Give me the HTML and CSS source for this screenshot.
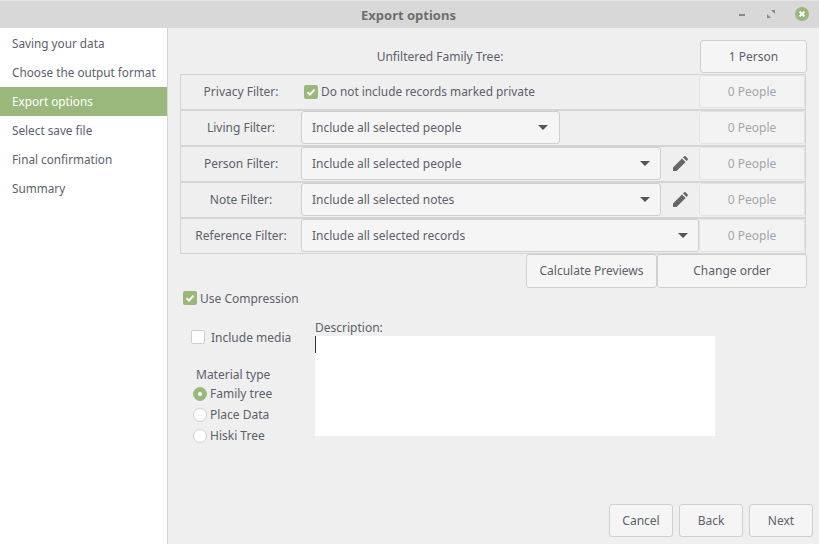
FILE: index.html
```html
<!DOCTYPE html>
<html lang="en">
<head>
    <meta charset="UTF-8">
    <meta name="viewport" content="width=device-width, initial-scale=1.0">
    <title>Export options</title>
    <link rel="stylesheet" href="styles.css">
</head>
<body>
    <div class="window">
        <header class="titlebar">
            <span class="title">Export options</span>
            <div class="win-buttons">
                <svg class="win-icon" width="12" height="12" viewBox="0 0 12 12"><rect x="4" y="6" width="6" height="2" fill="#8a8a8a"/></svg>
                <svg class="win-icon" width="12" height="12" viewBox="0 0 12 12"><path d="M6 2h4v4zM2 6l4 4H2z" fill="#8a8a8a"/></svg>
                <svg class="win-close" width="14" height="14" viewBox="0 0 14 14"><circle cx="7" cy="7" r="7" fill="#9ab87c"/><path d="M4.6 4.6l4.8 4.8M9.4 4.6l-4.8 4.8" stroke="#fff" stroke-width="2"/></svg>
            </div>
        </header>
        <div class="content">
            <nav class="sidebar">
                <div class="step">Saving your data</div>
                <div class="step">Choose the output format</div>
                <div class="step active">Export options</div>
                <div class="step">Select save file</div>
                <div class="step">Final confirmation</div>
                <div class="step">Summary</div>
            </nav>
            <main class="main">
                <div class="top-row">
                    <span class="top-label">Unfiltered Family Tree:</span>
                    <button class="btn count-btn">1 Person</button>
                </div>
                <div class="filters">
                    <div class="filter-row">
                        <div class="filter-label">Privacy Filter:</div>
                        <label class="check privacy">
                            <svg class="box" width="14" height="14" viewBox="0 0 14 14"><rect width="14" height="14" rx="2" fill="#9ab87c"/><path d="M3.5 7.2l2.4 2.4 4.6-5" fill="none" stroke="#fff" stroke-width="2"/></svg>
                            <span class="privacy-text">Do not include records marked private</span>
                        </label>
                        <div class="filter-count">0 People</div>
                    </div>
                    <div class="filter-row">
                        <div class="filter-label">Living Filter:</div>
                        <div class="select living">Include all selected people<span class="arrow"></span></div>
                        <div class="spacer"></div>
                        <div class="filter-count">0 People</div>
                    </div>
                    <div class="filter-row">
                        <div class="filter-label">Person Filter:</div>
                        <div class="select">Include all selected people<span class="arrow"></span></div>
                        <div class="edit">
                            <svg width="18" height="18" viewBox="0 0 18 18"><path d="M2 16v-3.600L11 3.400 14.600 7 5.600 16zM12 2.400l1.200-1.100q.7-.6 1.400 0l2.100 2.100q.6.700 0 1.400L15.600 6z" fill="#666"/></svg>
                        </div>
                        <div class="filter-count">0 People</div>
                    </div>
                    <div class="filter-row">
                        <div class="filter-label">Note Filter:</div>
                        <div class="select">Include all selected notes<span class="arrow"></span></div>
                        <div class="edit">
                            <svg width="18" height="18" viewBox="0 0 18 18"><path d="M2 16v-3.600L11 3.400 14.600 7 5.600 16zM12 2.400l1.200-1.100q.7-.6 1.400 0l2.100 2.100q.6.700 0 1.400L15.600 6z" fill="#666"/></svg>
                        </div>
                        <div class="filter-count">0 People</div>
                    </div>
                    <div class="filter-row">
                        <div class="filter-label">Reference Filter:</div>
                        <div class="select">Include all selected records<span class="arrow"></span></div>
                        <div class="filter-count">0 People</div>
                    </div>
                </div>
                <div class="action-row">
                    <button class="btn calc-btn">Calculate Previews</button>
                    <button class="btn order-btn">Change order</button>
                </div>
                <label class="check compression">
                    <svg class="box" width="14" height="14" viewBox="0 0 14 14"><rect width="14" height="14" rx="2" fill="#9ab87c"/><path d="M3.5 7.2l2.4 2.4 4.6-5" fill="none" stroke="#fff" stroke-width="2"/></svg>
                    Use Compression
                </label>
                <div class="lower">
                    <div class="options">
                        <label class="check media"><span class="empty-box"></span>Include media</label>
                        <div class="material-title">Material type</div>
                        <label class="radio"><span class="dot on"></span>Family tree</label>
                        <label class="radio"><span class="dot"></span>Place Data</label>
                        <label class="radio"><span class="dot"></span>Hiski Tree</label>
                    </div>
                    <div class="description">
                        <div class="desc-label">Description:</div>
                        <div class="desc-box"><span class="caret"></span></div>
                    </div>
                </div>
                <div class="footer">
                    <button class="btn nav-btn">Cancel</button>
                    <button class="btn nav-btn">Back</button>
                    <button class="btn nav-btn">Next</button>
                </div>
            </main>
        </div>
    </div>
</body>
</html>
```

FILE: styles.css
```css
* {
    box-sizing: border-box;
}

body {
    margin: 0;
    background-color: #efefef;
    color: #5c616c;
    font-family: "Noto Sans", sans-serif;
    font-size: 12px;
}

.window {
    width: 819px;
    height: 544px;
    display: flex;
    flex-direction: column;
    overflow: hidden;
}

.titlebar {
    height: 28px;
    flex: none;
    background-color: #d8d8d8;
    border-top: 1px solid #e6e6e6;
    position: relative;
    display: flex;
    align-items: center;
    justify-content: center;
}

.title {
    font-size: 13px;
    font-weight: bold;
    color: #6e6e6e;
    padding-right: 2px;
}

.win-buttons {
    position: absolute;
    right: 10px;
    top: 6px;
    display: flex;
    align-items: center;
    gap: 18px;
}

.content {
    flex: 1;
    display: flex;
    min-height: 0;
}

.sidebar {
    width: 168px;
    flex: none;
    background-color: #fff;
    border-right: 1px solid #d5d5d5;
    padding-top: 1px;
}

.step {
    height: 29px;
    line-height: 29px;
    padding-left: 12px;
    font-size: 11.75px;
}

.step.active {
    background-color: #9ab87c;
    color: #fff;
}

.main {
    flex: 1;
    display: flex;
    flex-direction: column;
    padding: 12px 12px 7px 12px;
}

.btn {
    font: inherit;
    color: inherit;
    background-color: #f5f5f5;
    border: 1px solid #cfcfcf;
    border-radius: 3px;
    padding: 0;
}

.top-row {
    display: flex;
    align-items: center;
    height: 33px;
}

.top-label {
    flex: 1;
    text-align: center;
}

.count-btn {
    width: 107px;
    height: 33px;
}

.filters {
    width: 626px;
    border: 1px solid #d5d5d5;
    border-bottom: 0;
    margin-top: 1px;
}

.filter-row {
    display: flex;
    height: 36px;
    padding-bottom: 1px;
    border-bottom: 2px solid #d5d5d5;
}

.filter-row:last-child {
    height: 35px;
    border-bottom: 1px solid #d5d5d5;
}

.filter-label {
    width: 120px;
    flex: none;
    display: flex;
    align-items: center;
    justify-content: center;
}

.select {
    flex: 1;
    display: flex;
    align-items: center;
    justify-content: space-between;
    background-color: #f5f5f5;
    border: 1px solid #cfcfcf;
    border-radius: 3px;
    padding: 0 10px;
}

.select.living {
    flex: none;
    width: 259px;
    padding-right: 11px;
}

.arrow {
    width: 0;
    height: 0;
    border-left: 5px solid transparent;
    border-right: 5px solid transparent;
    border-top: 5px solid #555;
}

.spacer {
    flex: 1;
}

.edit {
    width: 38px;
    flex: none;
    display: flex;
    align-items: center;
    justify-content: center;
}

.filter-count {
    width: 106px;
    flex: none;
    display: flex;
    align-items: center;
    justify-content: center;
    color: #a5a7ab;
    background-color: #f3f3f3;
    border: 1px solid #e3e3e3;
    border-radius: 3px;
}

.check,
.radio {
    display: flex;
    align-items: center;
}

.privacy {
    flex: 1;
    gap: 3px;
    padding-left: 3px;
}

.privacy-text {
    font-size: 11.85px;
    padding-bottom: 2px;
}

.action-row {
    display: flex;
    justify-content: flex-end;
}

.calc-btn {
    width: 131px;
    height: 34px;
    padding-bottom: 2px;
}

.order-btn {
    width: 150px;
    height: 34px;
    padding-bottom: 2px;
}

.compression {
    gap: 3px;
    margin: 1px 0 0 3px;
    height: 18px;
}

.lower {
    display: flex;
    margin-top: 11px;
}

.options {
    width: 135px;
    flex: none;
    padding-top: 10px;
}

.media {
    padding-left: 11px;
    gap: 6px;
    height: 18px;
}

.empty-box {
    width: 14px;
    height: 14px;
    background-color: #fff;
    border: 1px solid #cfcfcf;
    border-radius: 2px;
}

.material-title {
    margin: 20px 0 0 16px;
    height: 17px;
    line-height: 18px;
}

.radio {
    gap: 3px;
    padding-left: 13px;
    height: 21px;
}

.dot {
    width: 14px;
    height: 14px;
    border-radius: 50%;
    background-color: #fff;
    border: 1px solid #cfcfcf;
    display: flex;
    align-items: center;
    justify-content: center;
}

.dot.on {
    background-color: #9ab87c;
    border-color: #9ab87c;
}

.dot.on::after {
    content: "";
    width: 4px;
    height: 4px;
    border-radius: 50%;
    background-color: #fff;
}

.description {
    width: 400px;
}

.desc-label {
    height: 18px;
    line-height: 20px;
}

.desc-box {
    height: 100px;
    background-color: #fff;
}

.caret {
    display: block;
    width: 1px;
    height: 17px;
    background-color: #333;
}

.footer {
    margin-top: auto;
    margin-right: -6px;
    display: flex;
    justify-content: flex-end;
    gap: 6px;
}

.nav-btn {
    width: 64px;
    height: 33px;
}
```
